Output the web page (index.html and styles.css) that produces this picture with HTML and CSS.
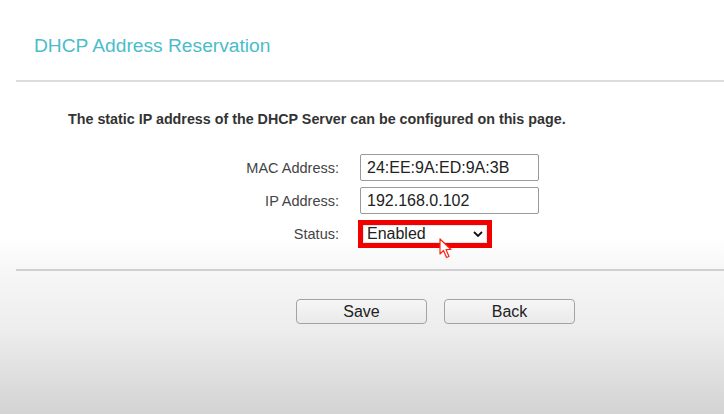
FILE: index.html
```html
<!DOCTYPE html>
<html lang="en">
  <head>
    <meta charset="UTF-8" />
    <meta name="viewport" content="width=device-width, initial-scale=1.0" />
    <title>DHCP Address Reservation</title>
    <link rel="stylesheet" href="styles.css">
  </head>
  <body>
    <div class="page">
      <h2 class="title">DHCP Address Reservation</h2>
      <div class="rule"></div>

      <p class="intro">The static IP address of the DHCP Server can be configured on this page.</p>

      <div class="form">
        <div class="row">
          <label for="mac">MAC Address:</label>
          <input id="mac" type="text" value="24:EE:9A:ED:9A:3B">
        </div>
        <div class="row">
          <label for="ip">IP Address:</label>
          <input id="ip" type="text" value="192.168.0.102">
        </div>
        <div class="row">
          <label for="status">Status:</label>
          <div class="select-wrap">
            <select id="status">
              <option selected>Enabled</option>
              <option>Disabled</option>
            </select>
            <svg class="cursor" width="14" height="22" viewBox="0 0 14 22">
              <path d="M1 1 L1 16 L4.5 12.5 L7.5 19.5 L10 18.5 L7 11.5 L12 11.5 Z" fill="#fff" stroke="#f21" stroke-width="1.2" stroke-linejoin="round"/>
            </svg>
          </div>
        </div>
      </div>

      <div class="rule rule-bottom"></div>

      <div class="buttons">
        <button type="button">Save</button>
        <button type="button">Back</button>
      </div>
    </div>
  </body>
</html>
```

FILE: styles.css
```css
html,
body {
  height: 100%;
}
body {
  margin: 0;
  font-family: "Liberation Sans", Arial, sans-serif;
  color: #333;
  background: linear-gradient(
    to bottom,
    #ffffff 0,
    #ffffff 238px,
    #f7f7f7 268px,
    #ededed 330px,
    #d3d3d3 414px
  );
}
.page {
  padding-top: 35px;
}
.title {
  margin: 0;
  padding-left: 34px;
  font-size: 19.2px;
  line-height: 22px;
  font-weight: normal;
  color: #4bbccb;
  height: 45px;
}
.rule {
  margin-left: 16px;
  height: 2px;
  background: #dcdcdc;
}
.intro {
  margin: 29px 0 0;
  padding-left: 68px;
  font-size: 14.3px;
  line-height: 17px;
  font-weight: bold;
  color: #333;
}
.form {
  margin-top: 26px;
  display: flex;
  flex-direction: column;
  gap: 6px;
}
.row {
  display: flex;
  align-items: center;
  height: 27px;
}
.row label {
  width: 339px;
  text-align: right;
  font-size: 14.5px;
  color: #444;
  margin-right: 21px;
}
.row input {
  box-sizing: border-box;
  width: 179px;
  height: 27px;
  margin: 0;
  padding: 0 6px;
  border: 1px solid #9a9a9a;
  border-radius: 2px;
  font-family: "Liberation Sans", Arial, sans-serif;
  font-size: 16px;
  color: #222;
  background: #fff;
}
.select-wrap {
  position: relative;
  margin-left: 3px;
}
.select-wrap select {
  display: block;
  box-sizing: border-box;
  width: 124px;
  height: 18px;
  margin: 0;
  padding: 0 0 0 3px;
  border: 1px solid #e8e8e8;
  outline: 5px solid #f20000;
  font-family: "Liberation Sans", Arial, sans-serif;
  font-size: 16px;
  line-height: 16px;
  color: #222;
  background: #fff url("data:image/svg+xml;utf8,<svg xmlns='http://www.w3.org/2000/svg' width='10' height='6' viewBox='0 0 10 6'><path d='M1 1 L5 5 L9 1' fill='none' stroke='%23111' stroke-width='1.8'/></svg>") no-repeat right 3px center;
  appearance: none;
  -webkit-appearance: none;
}
.cursor {
  position: absolute;
  left: 76px;
  top: 13px;
}
.rule-bottom {
  margin-top: 22px;
  background: #d0d0d0;
}
.buttons {
  display: flex;
  gap: 17px;
  padding-left: 296px;
  margin-top: 28px;
}
.buttons button {
  width: 131px;
  height: 25px;
  border: 1px solid #a3a3a3;
  border-radius: 4px;
  background: linear-gradient(to bottom, #f6f6f6, #eaeaea);
  font-family: "Liberation Sans", Arial, sans-serif;
  font-size: 16px;
  color: #222;
  padding: 0;
}
```
